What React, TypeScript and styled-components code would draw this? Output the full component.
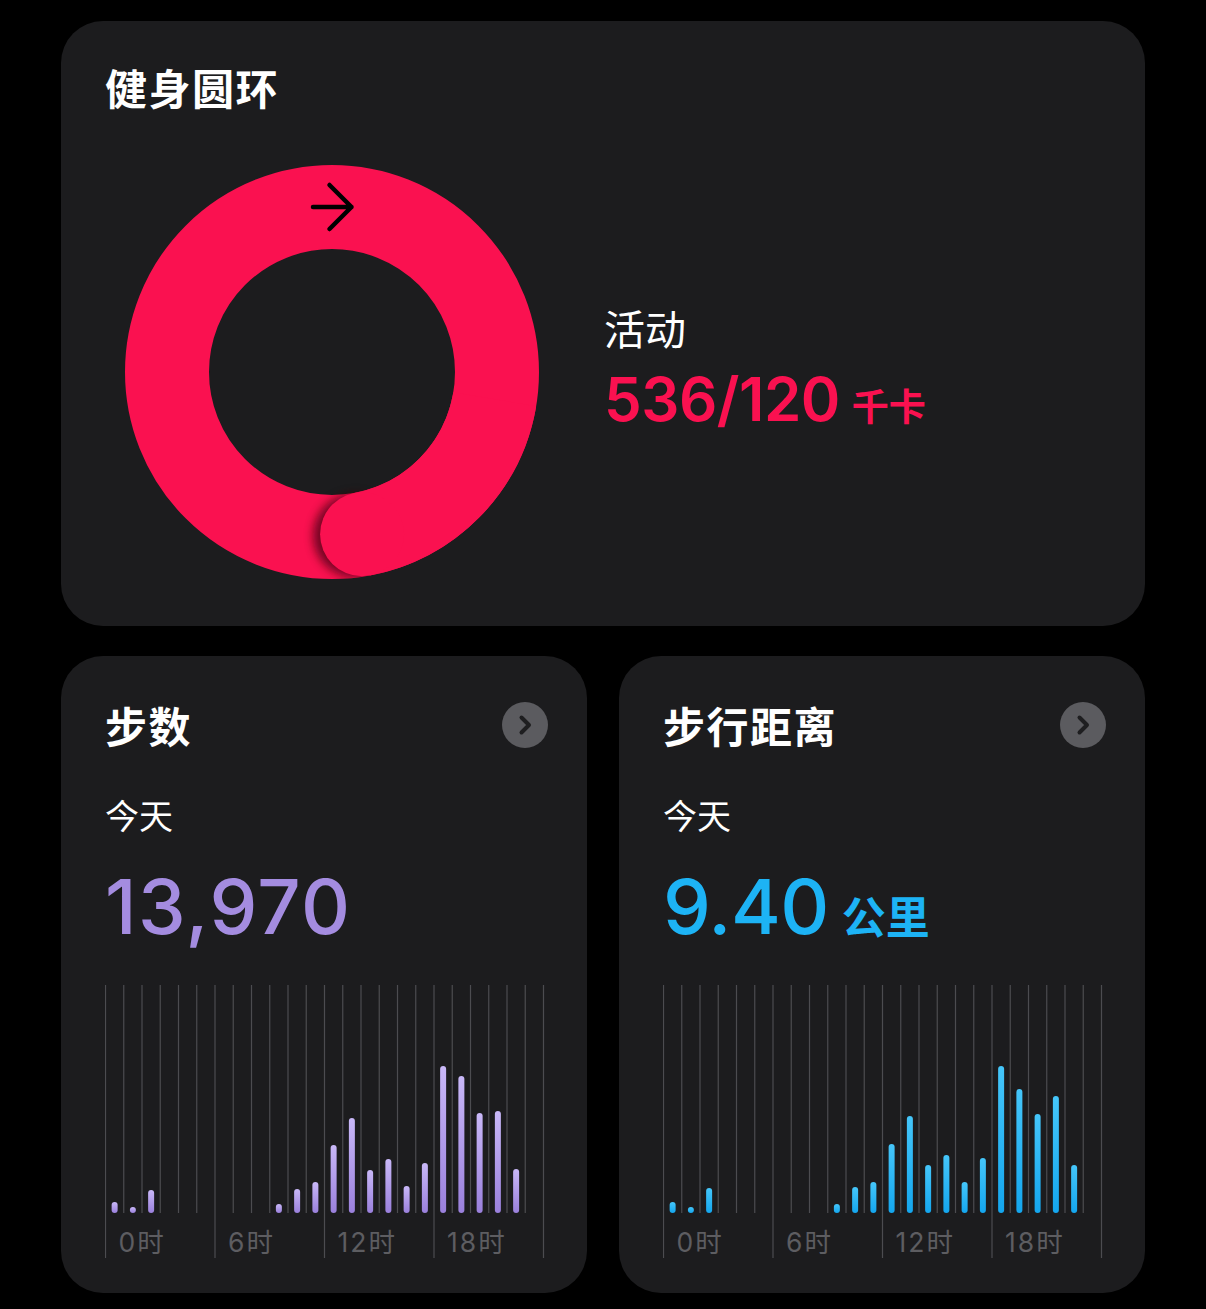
import React from "react";
import styled, { createGlobalStyle } from "styled-components";

const GlobalStyle = createGlobalStyle`
  html, body {
    margin: 0;
    padding: 0;
    background: #000;
  }
  body {
    font-family: Inter, "Noto Sans CJK SC", sans-serif;
    color: #fff;
    -webkit-font-smoothing: antialiased;
  }
`;

const CJK = `"Noto Sans CJK SC", "Noto Sans", sans-serif`;
const NUM = `Inter, "Noto Sans CJK SC", sans-serif`;

const MOVE_RED = "#FA1150";

const Page = styled.main`
  width: 1084px;
  padding: 21px 61px 16px;
  display: flex;
  flex-direction: column;
  gap: 30px;
`;

const Card = styled.section`
  background: #1c1c1e;
  border-radius: 42px;
  box-sizing: border-box;
`;

const RingCard = styled(Card)`
  height: 605px;
  padding: 45px 44px 0;
  display: flex;
  flex-direction: column;
`;

const CardTitle = styled.h2`
  margin: 0;
  font-family: ${CJK};
  font-size: 42px;
  font-weight: 700;
  line-height: 1;
  color: #fff;
  letter-spacing: 1.5px;
`;

const RingRow = styled.div`
  display: flex;
  align-items: center;
  gap: 65px;
  margin-top: 57px;
  padding-left: 20px;
`;

const RingStats = styled.div`
  display: flex;
  flex-direction: column;
  gap: 21px;
  margin-top: -8px;
`;

const StatLabel = styled.div`
  font-family: ${CJK};
  font-size: 41px;
  font-weight: 400;
  line-height: 1;
  color: #fff;
`;

const StatValue = styled.div<{ $color: string; $size: number; $tracking?: number }>`
  display: flex;
  align-items: baseline;
  gap: ${(p) => Math.round(p.$size * 0.2)}px;
  font-family: ${NUM};
  font-size: ${(p) => p.$size}px;
  font-weight: 600;
  line-height: 1;
  color: ${(p) => p.$color};
  letter-spacing: ${(p) => p.$tracking ?? -0.5}px;
`;

const Unit = styled.span<{ $size: number }>`
  font-family: ${CJK};
  font-size: ${(p) => p.$size}px;
  font-weight: 700;
  letter-spacing: 0;
`;

const MetricGrid = styled.div`
  display: grid;
  grid-template-columns: 526px 526px;
  gap: 32px;
`;

const MetricCard = styled(Card)`
  height: 637px;
  padding: 46px 39px 0 44px;
  display: flex;
  flex-direction: column;
`;

const MetricHeader = styled.div`
  display: flex;
  align-items: center;
  justify-content: space-between;
  height: 46px;
`;

const MoreButton = styled.button`
  width: 46px;
  height: 46px;
  border-radius: 50%;
  border: 0;
  padding: 0;
  background: #5b5b5f;
  display: flex;
  align-items: center;
  justify-content: center;
  cursor: pointer;
`;

const Period = styled.div`
  margin-top: 50px;
  font-family: ${CJK};
  font-size: 34px;
  font-weight: 400;
  line-height: 1;
  color: #fff;
`;

const MetricValue = styled(StatValue)`
  margin-top: 36px;
  font-weight: 500;
  gap: 13px;
`;

const ChartBox = styled.div`
  margin-top: 41px;
  width: 440px;
  height: 274px;
`;

function Chevron() {
  return (
    <svg width="22" height="24" viewBox="0 0 22 24" aria-hidden="true">
      <path
        d="M7.5 4.5 L15 12 L7.5 19.5"
        fill="none"
        stroke="#1e1e20"
        strokeWidth="4"
        strokeLinecap="round"
        strokeLinejoin="round"
      />
    </svg>
  );
}

// Move ring: a full lap underneath plus the overlapping tail of the next lap,
// whose rounded head casts a soft shadow onto the ring ahead of it.
function ActivityRing({ endDeg }: { endDeg: number }) {
  const size = 414;
  const c = size / 2;
  const r = 165;
  const w = 84;
  const pt = (deg: number, rad = r) => {
    const a = (deg * Math.PI) / 180;
    return { x: c + rad * Math.sin(a), y: c - rad * Math.cos(a) };
  };
  const start = endDeg - 70;
  const s = pt(start);
  const e = pt(endDeg);
  const a = (endDeg * Math.PI) / 180;
  const fwd = { x: Math.cos(a), y: Math.sin(a) };
  const shadow = { x: e.x + fwd.x * 7, y: e.y + fwd.y * 7 };
  const ro = r + w / 2;
  const ri = r - w / 2;

  return (
    <svg width={size} height={size} viewBox={`0 0 ${size} ${size}`} style={{ flex: "none" }}>
      <defs>
        <clipPath id="ringBand">
          <path
            fillRule="evenodd"
            d={`M ${c - ro} ${c} a ${ro} ${ro} 0 1 0 ${2 * ro} 0 a ${ro} ${ro} 0 1 0 ${-2 * ro} 0 Z M ${c - ri} ${c} a ${ri} ${ri} 0 1 0 ${2 * ri} 0 a ${ri} ${ri} 0 1 0 ${-2 * ri} 0 Z`}
          />
        </clipPath>
        <filter id="capBlur" x="-50%" y="-50%" width="200%" height="200%">
          <feGaussianBlur stdDeviation="5" />
        </filter>
      </defs>
      <circle cx={c} cy={c} r={r} fill="none" stroke={MOVE_RED} strokeWidth={w} />
      <g clipPath="url(#ringBand)">
        <circle
          cx={shadow.x}
          cy={shadow.y}
          r={w / 2}
          fill="#3a0010"
          opacity="0.7"
          filter="url(#capBlur)"
        />
      </g>
      <path
        d={`M ${s.x} ${s.y} A ${r} ${r} 0 0 1 ${e.x} ${e.y}`}
        fill="none"
        stroke={MOVE_RED}
        strokeWidth={w}
        strokeLinecap="butt"
      />
      <circle cx={e.x} cy={e.y} r={w / 2} fill={MOVE_RED} />
      <path
        d={`M ${c - 19} ${c - r} H ${c + 19.5} M ${c - 2.5} ${c - r - 22} L ${c + 19.5} ${c - r} L ${c - 2.5} ${c - r + 22}`}
        fill="none"
        stroke="#000"
        strokeWidth="4.5"
        strokeLinecap="round"
        strokeLinejoin="round"
      />
    </svg>
  );
}

type ChartProps = {
  id: string;
  values: number[];
  top: string;
  bottom: string;
};

// Hourly bars over a 24-slot grid; every sixth line runs down past the hour label.
function HourlyChart({ id, values, top, bottom }: ChartProps) {
  const step = 18.25;
  const base = 228;
  const lines = Array.from({ length: 25 }, (_, i) => i);
  return (
    <svg width="440" height="274" viewBox="0 0 440 274">
      <defs>
        <linearGradient id={id} x1="0" y1="0" x2="0" y2="1">
          <stop offset="0" stopColor={top} />
          <stop offset="1" stopColor={bottom} />
        </linearGradient>
      </defs>
      {lines.map((i) => {
        const x = 0.5 + i * step;
        const major = i % 6 === 0;
        return (
          <line
            key={i}
            x1={x}
            x2={x}
            y1={0}
            y2={major ? 273 : base}
            stroke="#4c4c50"
            strokeWidth="1.2"
          />
        );
      })}
      {values.map((v, i) => {
        if (!v) return null;
        const cx = 0.5 + (i + 0.5) * step;
        return (
          <rect
            key={i}
            x={cx - 3}
            y={base - v}
            width={6}
            height={v}
            rx={3}
            fill={`url(#${id})`}
          />
        );
      })}
      {[0, 6, 12, 18].map((h) => (
        <text
          key={h}
          x={0.5 + h * step + 13}
          y={267}
          fill="#5d5d61"
          fontSize="26.5"
          letterSpacing="2"
          fontFamily={`Inter, "Noto Sans CJK SC", sans-serif`}
        >
          {h}时
        </text>
      ))}
    </svg>
  );
}

const steps = [11, 6, 23, 0, 0, 0, 0, 0, 0, 9, 24, 31, 68, 95, 43, 54, 27, 50, 147, 137, 100, 102, 44, 0];
const distance = [11, 6, 25, 0, 0, 0, 0, 0, 0, 9, 26, 31, 69, 97, 48, 58, 31, 55, 147, 124, 99, 117, 48, 0];

type Metric = {
  title: string;
  value: string;
  unit?: string;
  tracking: number;
  color: string;
  barTop: string;
  barBottom: string;
  data: number[];
  id: string;
};

const metrics: Metric[] = [
  {
    title: "步数",
    value: "13,970",
    tracking: 1.5,
    color: "#A48CE0",
    barTop: "#C9B8F8",
    barBottom: "#9A80DC",
    data: steps,
    id: "stepsBar",
  },
  {
    title: "步行距离",
    value: "9.40",
    unit: "公里",
    tracking: -0.5,
    color: "#1DB3F5",
    barTop: "#45C6FA",
    barBottom: "#14A6EE",
    data: distance,
    id: "distanceBar",
  },
];

export default function App() {
  return (
    <>
      <GlobalStyle />
      <Page>
        <RingCard>
          <CardTitle>健身圆环</CardTitle>
          <RingRow>
            <ActivityRing endDeg={169.5} />
            <RingStats>
              <StatLabel>活动</StatLabel>
              <StatValue $color={MOVE_RED} $size={60}>
                536/120
                <Unit $size={37}>千卡</Unit>
              </StatValue>
            </RingStats>
          </RingRow>
        </RingCard>
        <MetricGrid>
          {metrics.map((m) => (
            <MetricCard key={m.id}>
              <MetricHeader>
                <CardTitle>{m.title}</CardTitle>
                <MoreButton aria-label="更多">
                  <Chevron />
                </MoreButton>
              </MetricHeader>
              <Period>今天</Period>
              <MetricValue $color={m.color} $size={76} $tracking={m.tracking}>
                {m.value}
                {m.unit && <Unit $size={44}>{m.unit}</Unit>}
              </MetricValue>
              <ChartBox>
                <HourlyChart id={m.id} values={m.data} top={m.barTop} bottom={m.barBottom} />
              </ChartBox>
            </MetricCard>
          ))}
        </MetricGrid>
      </Page>
    </>
  );
}
